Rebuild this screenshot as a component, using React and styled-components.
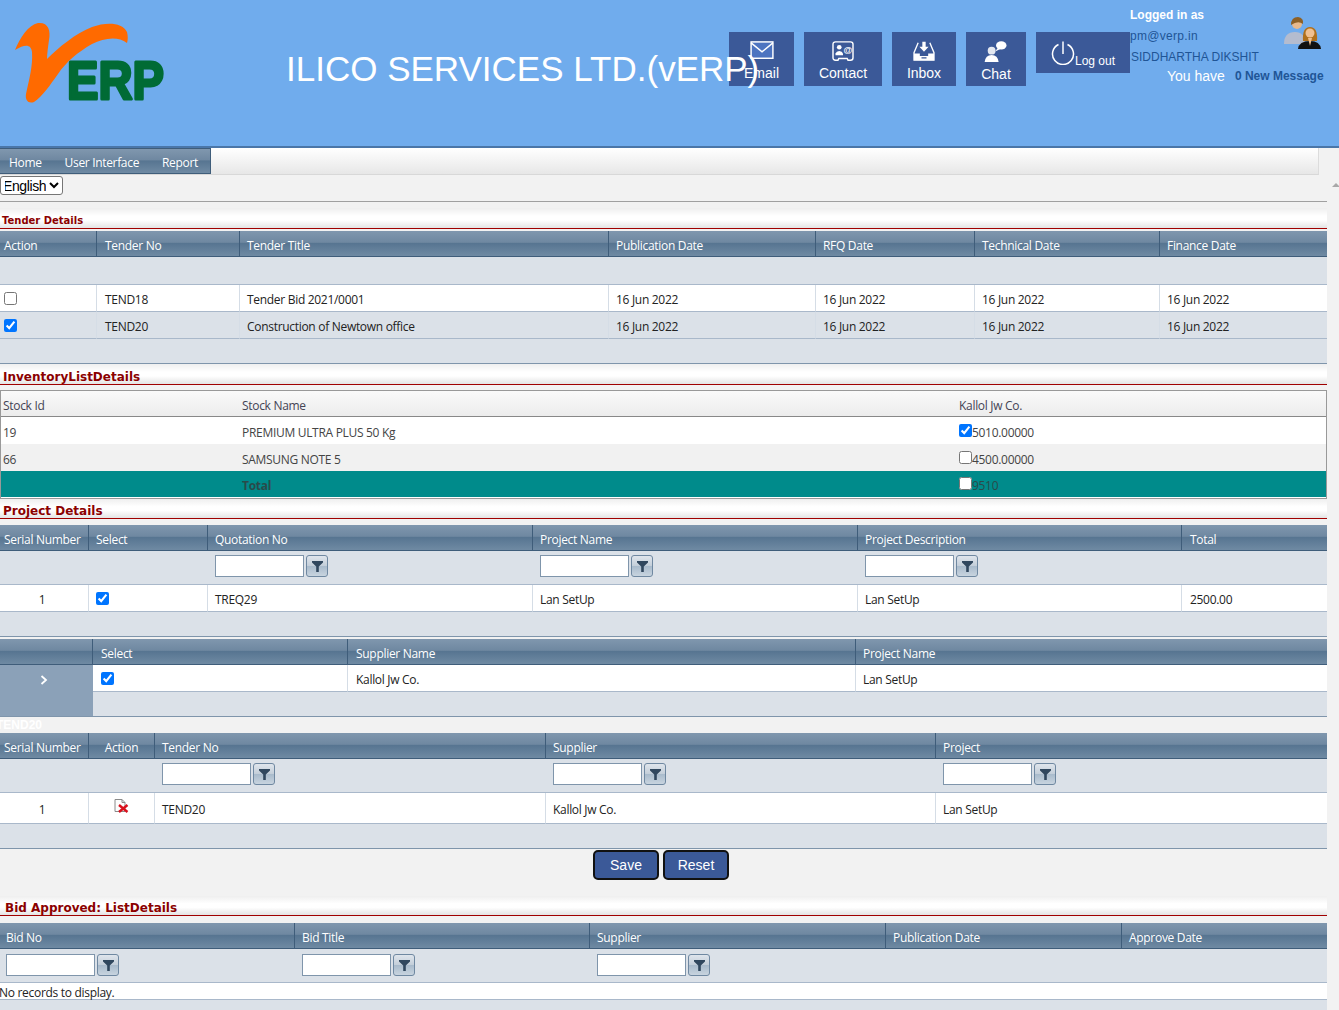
import React from "react";
import styled, { createGlobalStyle } from "styled-components";

const GlobalStyle = createGlobalStyle`
  html, body {
    margin: 0;
    padding: 0;
    background: #f2f2f2;
    overflow: hidden;
  }
  #root {
    height: 1010px;
    overflow: hidden;
  }
`;

const GRID_FONT = `"Open Sans", "Noto Sans", sans-serif`;

/* header */

const Header = styled.header`
  display: flex;
  height: 146px;
  background: #70aced;
  border-bottom: 2px solid #4a76a8;
  font-family: "Liberation Sans", Arial, sans-serif;
`;

const LogoBox = styled.div`
  width: 286px;
  flex: none;
`;

const LogoSvg = styled.svg`
  display: block;
  width: 170px;
  height: 110px;
`;

const LogoText = styled.text`
  font-family: "Liberation Sans", Arial, sans-serif;
  font-weight: 700;
  font-size: 54px;
  fill: #006b35;
  stroke: #006b35;
  stroke-width: 3;
  stroke-linejoin: round;
`;

const CompanyTitle = styled.h1`
  position: relative;
  z-index: 1;
  width: 443px;
  flex: none;
  margin: 48px 0 0;
  font-size: 35px;
  line-height: 42px;
  font-weight: 400;
  color: #fff;
  white-space: nowrap;
`;

const Tools = styled.div`
  display: flex;
  align-items: flex-start;
  gap: 10px;
  width: 401px;
  flex: none;
  padding-top: 32px;
  box-sizing: border-box;
`;

const ToolButton = styled.div`
  width: ${(p) => p.$w}px;
  height: 54px;
  box-sizing: border-box;
  padding-top: 9px;
  background: #3b5998;
  color: #fff;
  font-size: 14px;
  display: flex;
  flex-direction: column;
  align-items: center;
  gap: 4px;
  line-height: 16px;
  white-space: nowrap;
`;

const LogoutButton = styled.div`
  width: 94px;
  height: 41px;
  box-sizing: border-box;
  padding: 9px 0 0 15px;
  background: #3b5998;
  color: #fff;
  font-size: 12px;
  display: flex;
  align-items: flex-start;
  white-space: nowrap;
  span {
    line-height: 14px;
    margin: 13px 0 0 0;
  }
`;

const ToolIcon = styled.svg`
  width: ${(p) => p.$w}px;
  height: ${(p) => p.$h}px;
  flex: none;
  display: block;
`;

const AtSign = styled.text`
  font-family: "Liberation Sans", Arial, sans-serif;
  font-size: 11px;
  font-weight: 700;
  fill: #fff;
`;

const UserPanel = styled.div`
  position: relative;
  flex: 1;
  padding-top: 8px;
  font-size: 12px;
  line-height: 21px;
`;

const LoggedIn = styled.div`
  color: #fff;
  font-weight: 700;
  height: 14px;
  line-height: 14px;
  margin-bottom: 4px;
`;

const UserLine = styled.div`
  color: #1f5596;
  height: 21px;
  margin-left: ${(p) => p.$left || 0}px;
  letter-spacing: ${(p) => p.$spacing || 0}px;
`;

const MessageLine = styled.div`
  display: flex;
  align-items: center;
  gap: 10px;
  margin: -1px 0 0 37px;
  height: 18px;
`;

const YouHave = styled.span`
  color: #fff;
  font-size: 14px;
`;

const NewMessage = styled.span`
  color: #1f5596;
  font-weight: 700;
`;

const UsersSvg = styled.svg`
  position: absolute;
  left: 153px;
  top: 17px;
  width: 39px;
  height: 32px;
  filter: blur(0.3px);
`;

/* nav */

const NavBar = styled.nav`
  width: 1319px;
  height: 27px;
  box-sizing: border-box;
  background: linear-gradient(#ffffff, #e7e7e7);
  border-right: 1px solid #dcdcdc;
  border-bottom: 1px solid #d8d8d8;
`;

const Menu = styled.div`
  display: flex;
  width: 211px;
  height: 26px;
  box-sizing: border-box;
  padding: 2px 0 0 9px;
  gap: 23px;
  align-items: center;
  background: linear-gradient(#8097ae 0%, #6f88a1 45%, #577591 50%, #6f8aa3 100%);
  border: 1px solid #3f5d7a;
  border-left: none;
`;

const MenuItem = styled.span`
  font-family: ${GRID_FONT};
  font-size: 12px;
  letter-spacing: -0.33px;
  color: #fff;
`;

const ScrollArrow = styled.div`
  position: absolute;
  left: 1332px;
  top: 183px;
  width: 0;
  height: 0;
  border-left: 4px solid transparent;
  border-right: 4px solid transparent;
  border-bottom: 4px solid #a8a8a8;
`;

/* page */

const Content = styled.main`
  width: 1327px;
  display: flex;
  flex-direction: column;
  align-items: stretch;
  font-family: ${GRID_FONT};
  letter-spacing: -0.3px;
`;

const LanguageSelect = styled.select`
  align-self: flex-start;
  width: 63px;
  height: 19px;
  margin: 1px 0 0;
  padding: 0;
  text-indent: -2px;
  font-family: "Liberation Sans", Arial, sans-serif;
  font-size: 14px;
  letter-spacing: -0.4px;
  background: #fff;
  border: 1px solid #767676;
  border-radius: 3px;
`;

const TopRule = styled.hr`
  margin: 6px 0 6px;
  border: none;
  border-top: 1px solid #a0a0a0;
  height: 0;
`;

const SectionTitle = styled.h2`
  margin: ${(p) => p.$top || 0}px 0 0;
  height: ${(p) => p.$height}px;
  box-sizing: border-box;
  padding: 0 0 0 ${(p) => p.$left}px;
  display: flex;
  align-items: flex-end;
  background: linear-gradient(#efefef, #ffffff 40%, #ffffff 60%, #e4e4e4);
  border-bottom: 1px solid #a00000;
  font-family: "DejaVu Sans", Verdana, sans-serif;
  font-size: ${(p) => p.$size}px;
  letter-spacing: 0;
  line-height: 14px;
  font-weight: 700;
  color: #8b0000;
`;

/* grids */

const HeadCell = styled.th`
  height: 26px;
  box-sizing: border-box;
  padding: 3px ${(p) => p.$pad || 7}px 0;
  text-align: ${(p) => (p.$center ? "center" : "left")};
  font-weight: 400;
  color: #fff;
  white-space: nowrap;
  background: linear-gradient(#8097ae 0%, #6f88a1 45%, #577591 50%, #6f8aa3 100%);
  border-right: 1px solid #3f5d7a;
  border-bottom: 1px solid #3f5d7a;
  &:first-child {
    padding-left: 4px;
  }
  &:last-child {
    border-right: none;
  }
`;

const FilterCell = styled.td`
  height: ${(p) => p.$height}px;
  box-sizing: border-box;
  padding: ${(p) => p.$top}px 7px 0;
  vertical-align: top;
  background: #dbe1e8;
  border-bottom: 1px solid #a9b8ca;
`;

const Grid = styled.table`
  width: 1327px;
  table-layout: fixed;
  border-collapse: separate;
  border-spacing: 0;
  margin-top: ${(p) => p.$top || 0}px;
  border-bottom: 1px solid #7f95ab;
  font-size: 12px;
  ${(p) =>
    p.$inset &&
    `
    th:first-child {
      padding-left: 6px;
    }
    td:first-child input[type="text"] {
      margin-left: -1px;
    }
  `}
`;

const FootCell = styled.td`
  height: ${(p) => p.$height}px;
  box-sizing: border-box;
  padding: 0;
  background: #dbe1e8;
`;

const Row = styled.tr`
  height: ${(p) => p.$height || 27}px;
  background: ${(p) => (p.$alt ? "#dbe1e8" : "#fff")};
`;

const Cell = styled.td`
  box-sizing: border-box;
  padding: 4px ${(p) => p.$pad || 7}px 0;
  color: #222;
  white-space: nowrap;
  text-align: ${(p) => (p.$center ? "center" : "left")};
  border-bottom: 1px solid #a9b8ca;
  border-right: 1px solid #d5dde6;
  line-height: 14px;
  &:last-child {
    border-right: none;
  }
  svg {
    display: inline-block;
    vertical-align: middle;
    margin-bottom: 8px;
  }
`;

const SerialCell = styled(Cell)`
  padding: 4px 11px 0 7px;
  text-align: center;
`;

const EmptyCell = styled(Cell)`
  padding: 4px 0 0;
  line-height: 12px;
  text-indent: -1px;
`;

const CheckCell = styled(Cell)`
  padding: 0 0 0 ${(p) => p.$left || 4}px;
`;

const Check = styled.input`
  display: block;
  width: 13px;
  height: 13px;
  margin: 0;
`;

const ExpandCell = styled.td`
  background: #8ba1b8;
  vertical-align: top;
  padding: 10px 5px 0 0;
  svg {
    display: block;
    margin: 0 auto;
  }
`;

const FilterWrap = styled.div`
  display: flex;
  gap: 2px;
  align-items: center;
`;

const FilterInput = styled.input`
  width: 89px;
  height: 22px;
  box-sizing: border-box;
  padding: 0 2px;
  background: #fff;
  border: 1px solid #7f95ab;
  outline: none;
`;

const FilterButton = styled.button`
  width: 22px;
  height: 22px;
  padding: 0;
  display: flex;
  align-items: center;
  justify-content: center;
  background: linear-gradient(#dfe5ec 0%, #c3ced9 50%, #a9bbcc 52%, #c8d4df 100%);
  border: 1px solid #6f88a1;
  border-radius: 3px;
`;

const GridCaption = styled.div`
  height: 16px;
  margin-left: -4px;
  font-family: "Liberation Sans", Arial, sans-serif;
  font-size: 12px;
  letter-spacing: 0;
  line-height: 16px;
  font-weight: 700;
  color: #fff;
`;

/* inventory */

const InventoryTable = styled.table`
  width: 1327px;
  table-layout: fixed;
  border-collapse: separate;
  border-spacing: 0;
  margin-top: 5px;
  border: 1px solid #999;
  font-size: 12px;
  color: #444;
  td {
    padding: 3px 0 0 2px;
    white-space: nowrap;
    box-sizing: border-box;
  }
`;

const InvHead = styled.th`
  height: 26px;
  box-sizing: border-box;
  padding: 3px 0 0 2px;
  text-align: left;
  font-weight: 400;
  color: #445;
  background: linear-gradient(#fafafa, #ececec);
  border-bottom: 1px solid #888;
`;

const InvRow = styled.tr`
  height: 27px;
  background: ${(p) => (p.$alt ? "#f1f1f1" : "#fff")};
`;

const InvTotal = styled.tr`
  height: 27px;
  background: #008b8b;
  color: #2a4a4a;
  td {
    border-bottom: 1px solid #fff;
  }
  td:nth-child(2) {
    font-weight: 700;
  }
`;

const InvCheck = styled.input`
  width: 13px;
  height: 13px;
  margin: 0;
  vertical-align: 0;
`;

/* buttons */

const Actions = styled.div`
  display: flex;
  justify-content: center;
  gap: 4px;
  height: 30px;
  margin-top: 1px;
  padding-right: 5px;
`;

const ActionButton = styled.button`
  width: 66px;
  height: 30px;
  padding: 0;
  background: #3b5998;
  border: 2px solid #111;
  border-radius: 5px;
  color: #fff;
  font-family: "Liberation Sans", Arial, sans-serif;
  font-size: 14px;
`;

const Logo = () => (
  <LogoSvg viewBox="0 0 170 110" aria-label="vERP">
    <path
      d="M15 50 C20 38 28 25 38 23 C48 22 51 30 49 40 C48 47 47 54 47 59 C58 48 76 33 92 27 C106 22 122 22 127 32 C128 36 128 40 127 43 C118 36 104 38 92 44 C78 52 66 62 58 74 C50 85 42 97 34 102 C28 104 25 100 26 94 C29 80 33 66 32 52 C31 44 25 44 15 50 Z"
      fill="#ff6a00"
    />
    <LogoText x="67" y="98.5" textLength="97" lengthAdjust="spacingAndGlyphs">
      ERP
    </LogoText>
  </LogoSvg>
);

const MailIcon = () => (
  <ToolIcon viewBox="0 0 26 22" $w={24} $h={20}>
    <rect x="1" y="1" width="24" height="18" fill="#4d74c0" stroke="#fff" strokeWidth="1.6" />
    <path d="M1 2 L13 12 L25 2" fill="none" stroke="#fff" strokeWidth="1.6" />
  </ToolIcon>
);

const ContactIcon = () => (
  <ToolIcon viewBox="0 0 26 24" $w={24} $h={20}>
    <path
      d="M4 1 H22 Q25 1 25 4 V20 Q25 23 22 23 H19 L18 21 H8 L7 23 H4 Q1 23 1 20 V4 Q1 1 4 1 Z"
      fill="none"
      stroke="#fff"
      strokeWidth="1.7"
    />
    <circle cx="8.5" cy="7.5" r="2.8" fill="#fff" />
    <path d="M4 17 V15 Q5 12 8.5 12 Q12 12 13 15 V17 Z" fill="#fff" />
    <AtSign x="13.5" y="14">@</AtSign>
  </ToolIcon>
);

const InboxIcon = () => (
  <ToolIcon viewBox="0 0 26 24" $w={24} $h={20}>
    <path d="M6 2 L1 14 V23 H25 V14 L20 2" fill="none" stroke="#fff" strokeWidth="1.6" />
    <path d="M1 15 H8 V18 H18 V15 H25 V23 H1 Z" fill="#fff" />
    <path d="M11 1 H15 V7 H18.5 L13 13 L7.5 7 H11 Z" fill="#fff" />
    <rect x="10" y="19.5" width="6" height="1.5" fill="#3b5998" />
  </ToolIcon>
);

const ChatIcon = () => (
  <ToolIcon viewBox="0 0 26 24" $w={24} $h={21}>
    <circle cx="8" cy="11" r="4.5" fill="#e4e8f0" />
    <path d="M0 24 Q1 16 8 16 Q15 16 16 24 Z" fill="#fff" />
    <ellipse cx="19" cy="5" rx="6" ry="4.6" fill="#fff" />
    <path d="M15 8 L12 12 L18 9 Z" fill="#fff" />
  </ToolIcon>
);

const PowerIcon = () => (
  <ToolIcon viewBox="0 0 24 24" $w={24} $h={24}>
    <path d="M12 0.5 V13" stroke="#fff" strokeWidth="1.5" fill="none" />
    <path d="M7.5 3.5 A10.5 10.5 0 1 0 16.5 3.5" stroke="#fff" strokeWidth="1.5" fill="none" />
  </ToolIcon>
);

const UsersIcon = () => (
  <UsersSvg viewBox="0 0 39 32">
    <path d="M1 27 Q1 15 12 15 Q22 15 22 27 Z" fill="#b4bccf" />
    <circle cx="14" cy="7" r="5" fill="#e8b98c" />
    <path d="M8 8 Q8 0 15 0 Q21 1 20 7 Q15 3 8 8 Z" fill="#8d6026" />
    <path d="M20 24 Q19 10 27 10 Q35 10 34 24 Z" fill="#b0701c" />
    <circle cx="27" cy="16" r="4.5" fill="#f0c090" />
    <path d="M15 32 Q16 24 27 24 Q37 24 38 32 Z" fill="#111" />
    <path d="M25 21 H29 L27 29 Z" fill="#f0c090" />
  </UsersSvg>
);

const FilterIcon = () => (
  <svg width="11" height="11" viewBox="0 0 11 11">
    <path d="M0 0 H11 V1.5 L6.8 5.5 V11 H4.2 V5.5 L0 1.5 Z" fill="#30475e" />
  </svg>
);

const DeleteIcon = () => (
  <svg width="15" height="14" viewBox="0 0 15 14">
    <path d="M1 .5 H8 L11 3.5 V12.5 H1 Z" fill="#fdfdfd" stroke="#8a8a8a" />
    <path d="M8 .5 V3.5 H11" fill="none" stroke="#8a8a8a" />
    <path d="M5 6 L13.5 13 M13.5 6 L5 13" stroke="#d8101c" strokeWidth="2.4" />
  </svg>
);

const Chevron = () => (
  <svg width="8" height="10" viewBox="0 0 8 10">
    <path d="M1.5 1 L6 5 L1.5 9" fill="none" stroke="#fff" strokeWidth="1.8" />
  </svg>
);

const FilterBox = () => (
  <FilterWrap>
    <FilterInput type="text" />
    <FilterButton type="button">
      <FilterIcon />
    </FilterButton>
  </FilterWrap>
);

// header row + optional filter row are the same in every grid
const GridHead = ({ cols }) => (
  <>
    <colgroup>
      {cols.map((c, i) => (
        <col key={i} width={c.w} />
      ))}
    </colgroup>
    <thead>
      <tr>
        {cols.map((c, i) => (
          <HeadCell key={i} $center={c.center} $pad={c.pad}>
            {c.title}
          </HeadCell>
        ))}
      </tr>
    </thead>
  </>
);

const FilterRow = ({ cols, height = 34, top = 4 }) => (
  <tr>
    {cols.map((c, i) => (
      <FilterCell key={i} $height={height} $top={top}>
        {c.filter && <FilterBox />}
      </FilterCell>
    ))}
  </tr>
);

const FootRow = ({ span, height = 24 }) => (
  <tr>
    <FootCell colSpan={span} $height={height} />
  </tr>
);

const tenderCols = [
  { w: 97, title: "Action" },
  { w: 143, title: "Tender No", pad: 8 },
  { w: 369, title: "Tender Title" },
  { w: 207, title: "Publication Date" },
  { w: 159, title: "RFQ Date" },
  { w: 185, title: "Technical Date" },
  { w: 167, title: "Finance Date" },
];

const tenders = [
  { no: "TEND18", title: "Tender Bid 2021/0001", checked: false },
  { no: "TEND20", title: "Construction of Newtown office", checked: true },
];

const projectCols = [
  { w: 89, title: "Serial Number" },
  { w: 119, title: "Select" },
  { w: 325, title: "Quotation No", filter: true },
  { w: 325, title: "Project Name", filter: true },
  { w: 324, title: "Project Description", filter: true },
  { w: 145, title: "Total", pad: 8 },
];

const supplierCols = [
  { w: 93, title: "" },
  { w: 255, title: "Select", pad: 8 },
  { w: 508, title: "Supplier Name", pad: 8 },
  { w: 471, title: "Project Name" },
];

const selectedCols = [
  { w: 89, title: "Serial Number" },
  { w: 66, title: "Action", center: true },
  { w: 391, title: "Tender No", filter: true },
  { w: 390, title: "Supplier", filter: true },
  { w: 391, title: "Project", filter: true },
];

const bidCols = [
  { w: 295, title: "Bid No", filter: true },
  { w: 295, title: "Bid Title", filter: true },
  { w: 296, title: "Supplier", filter: true },
  { w: 236, title: "Publication Date" },
  { w: 205, title: "Approve Date" },
];

export default function App() {
  return (
    <>
      <GlobalStyle />
      <Header>
        <LogoBox>
          <Logo />
        </LogoBox>
        <CompanyTitle>ILICO SERVICES LTD.(vERP)</CompanyTitle>
        <Tools>
          <ToolButton $w={65}>
            <MailIcon />
            <span>Email</span>
          </ToolButton>
          <ToolButton $w={78}>
            <ContactIcon />
            <span>Contact</span>
          </ToolButton>
          <ToolButton $w={64}>
            <InboxIcon />
            <span>Inbox</span>
          </ToolButton>
          <ToolButton $w={60}>
            <ChatIcon />
            <span>Chat</span>
          </ToolButton>
          <LogoutButton>
            <PowerIcon />
            <span>Log out</span>
          </LogoutButton>
        </Tools>
        <UserPanel>
          <LoggedIn>Logged in as</LoggedIn>
          <UserLine $spacing={0.3}>pm@verp.in</UserLine>
          <UserLine $left={1}>SIDDHARTHA DIKSHIT</UserLine>
          <MessageLine>
            <YouHave>You have</YouHave>
            <NewMessage>0 New Message</NewMessage>
          </MessageLine>
          <UsersIcon />
        </UserPanel>
      </Header>

      <NavBar>
        <Menu>
          <MenuItem>Home</MenuItem>
          <MenuItem>User Interface</MenuItem>
          <MenuItem>Report</MenuItem>
        </Menu>
      </NavBar>
      <ScrollArrow />

      <Content>
        <LanguageSelect defaultValue="English">
          <option>English</option>
        </LanguageSelect>
        <TopRule />

        <SectionTitle $size={10} $height={21} $left={2}>
          Tender Details
        </SectionTitle>
        <Grid $top={2}>
          <GridHead cols={tenderCols} />
          <tbody>
            <FilterRow cols={tenderCols} height={28} />
            {tenders.map((t, i) => (
              <Row key={t.no} $alt={i % 2 === 1}>
                <CheckCell>
                  <Check type="checkbox" defaultChecked={t.checked} />
                </CheckCell>
                <Cell $pad={8}>{t.no}</Cell>
                <Cell>{t.title}</Cell>
                <Cell>16 Jun 2022</Cell>
                <Cell>16 Jun 2022</Cell>
                <Cell>16 Jun 2022</Cell>
                <Cell>16 Jun 2022</Cell>
              </Row>
            ))}
            <FootRow span={7} />
          </tbody>
        </Grid>

        <SectionTitle $size={12} $height={21} $left={3}>
          InventoryListDetails
        </SectionTitle>
        <InventoryTable>
          <colgroup>
            <col width={239} />
            <col width={717} />
            <col />
          </colgroup>
          <thead>
            <tr>
              <InvHead>Stock Id</InvHead>
              <InvHead>Stock Name</InvHead>
              <InvHead>Kallol Jw Co.</InvHead>
            </tr>
          </thead>
          <tbody>
            <InvRow>
              <td>19</td>
              <td>PREMIUM ULTRA PLUS 50 Kg</td>
              <td>
                <InvCheck type="checkbox" defaultChecked />
                5010.00000
              </td>
            </InvRow>
            <InvRow $alt>
              <td>66</td>
              <td>SAMSUNG NOTE 5</td>
              <td>
                <InvCheck type="checkbox" />
                4500.00000
              </td>
            </InvRow>
            <InvTotal>
              <td />
              <td>Total</td>
              <td>
                <InvCheck type="checkbox" />
                9510
              </td>
            </InvTotal>
          </tbody>
        </InventoryTable>

        <SectionTitle $size={12} $height={20} $left={3}>
          Project Details
        </SectionTitle>
        <Grid $top={6}>
          <GridHead cols={projectCols} />
          <tbody>
            <FilterRow cols={projectCols} />
            <Row>
              <SerialCell>1</SerialCell>
              <CheckCell $left={7}>
                <Check type="checkbox" defaultChecked />
              </CheckCell>
              <Cell>TREQ29</Cell>
              <Cell>Lan SetUp</Cell>
              <Cell>Lan SetUp</Cell>
              <Cell $pad={8}>2500.00</Cell>
            </Row>
            <FootRow span={6} />
          </tbody>
        </Grid>

        <Grid $top={2}>
          <GridHead cols={supplierCols} />
          <tbody>
            <Row>
              <ExpandCell rowSpan={2}>
                <Chevron />
              </ExpandCell>
              <CheckCell $left={8}>
                <Check type="checkbox" defaultChecked />
              </CheckCell>
              <Cell $pad={8}>Kallol Jw Co.</Cell>
              <Cell>Lan SetUp</Cell>
            </Row>
            <FootRow span={3} />
          </tbody>
        </Grid>

        <GridCaption>TEND20</GridCaption>
        <Grid>
          <GridHead cols={selectedCols} />
          <tbody>
            <FilterRow cols={selectedCols} />
            <Row $height={31}>
              <SerialCell>1</SerialCell>
              <Cell $center>
                <DeleteIcon />
              </Cell>
              <Cell>TEND20</Cell>
              <Cell>Kallol Jw Co.</Cell>
              <Cell>Lan SetUp</Cell>
            </Row>
            <FootRow span={5} />
          </tbody>
        </Grid>

        <Actions>
          <ActionButton type="button">Save</ActionButton>
          <ActionButton type="button">Reset</ActionButton>
        </Actions>

        <SectionTitle $size={12} $height={20} $left={5} $top={16}>
          Bid Approved: ListDetails
        </SectionTitle>
        <Grid $top={7} $inset>
          <GridHead cols={bidCols} />
          <tbody>
            <FilterRow cols={bidCols} top={5} />
            <Row $height={17}>
              <EmptyCell colSpan={5}>No records to display.</EmptyCell>
            </Row>
            <FootRow span={5} />
          </tbody>
        </Grid>
      </Content>
    </>
  );
}
